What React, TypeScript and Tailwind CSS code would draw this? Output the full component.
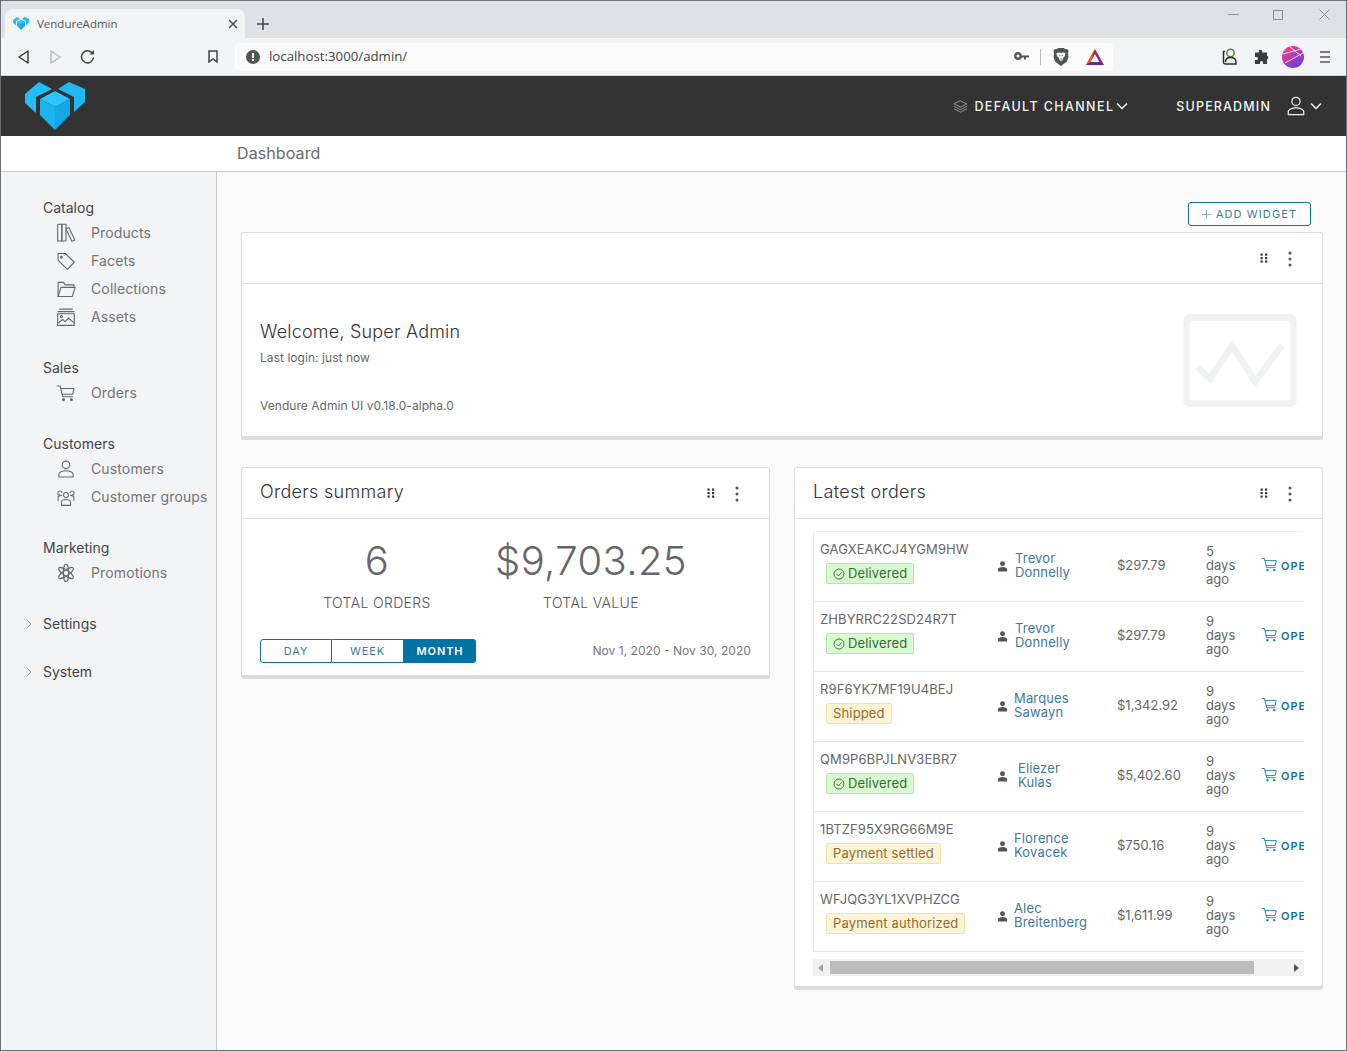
import React from 'react';

const FONT = "font-['Inter','Liberation_Sans',sans-serif]";

const Logo: React.FC<{ className?: string }> = ({ className }) => (
  <svg className={className} viewBox="25 82 60 48">
    <polygon points="39,82 25,94 25,103 36,113 36,97 52,89" fill="#22bdfb" />
    <polygon points="69,82 85,89 85,102 74,112 74,97 58,89" fill="#1fb8f5" />
    <polygon points="55,91 40,99 55,107 70,99" fill="#2cc4ff" />
    <polygon points="40,99 40,115 55,130 55,107" fill="#1cb5f4" />
    <polygon points="70,99 70,115 55,130 55,107" fill="#12a8e6" />
  </svg>
);

const Line: React.FC<{ className?: string; children: React.ReactNode; box?: string }> = ({ className, children, box = '0 0 24 24' }) => (
  <svg className={className} viewBox={box} fill="none" stroke="currentColor" strokeWidth={1.3} strokeLinecap="round" strokeLinejoin="round">
    {children}
  </svg>
);

const ProductsIcon = () => (
  <Line className="w-[20px] h-[20px]">
    <rect x="2" y="1.500" width="5" height="20" />
    <rect x="7" y="1.500" width="5" height="20" />
    <path d="M12.500 7l3-1.500 7 15-3.500 1.500-6.500-14" />
  </Line>
);
const FacetsIcon = () => (
  <Line className="w-[20px] h-[20px]">
    <path d="M2.500 3.500v7.500l11 11 8.500-8.500-11-10.500h-8.500z" />
    <circle cx="6.500" cy="7.500" r="1.100" />
  </Line>
);
const CollectionsIcon = () => (
  <Line className="w-[20px] h-[20px]">
    <path d="M2.500 21V4h6.500l2 3h10.500v3" />
    <path d="M2.500 21l3.500-11h17l-3.500 11h-17z" />
  </Line>
);
const AssetsIcon = () => (
  <Line className="w-[20px] h-[20px]">
    <rect x="2" y="8" width="20" height="14" />
    <path d="M2.500 5.500h19M4.500 2.500h15" strokeWidth={1.600} />
    <circle cx="6.500" cy="11.500" r="1.200" />
    <path d="M3 19l5-4 3 2.500 4-4 6 5" />
  </Line>
);
const CartIcon: React.FC<{ className?: string }> = ({ className = 'w-[20px] h-[20px]' }) => (
  <Line className={className}>
    <path d="M1.500 3.500h3.500l3 13h12" />
    <path d="M5.500 6.500h16l-1.500 7h-12.800" />
    <circle cx="9" cy="20" r="1.100" fill="currentColor" />
    <circle cx="18.500" cy="20" r="1.100" fill="currentColor" />
  </Line>
);
const UserIcon: React.FC<{ className?: string }> = ({ className = 'w-[20px] h-[20px]' }) => (
  <Line className={className}>
    <circle cx="12" cy="7" r="4.500" />
    <path d="M3.500 21.500v-3.500c0-2 4-4 8.500-4s8.500 2 8.500 4v3.500z" />
  </Line>
);
const GroupsIcon = () => (
  <Line className="w-[20px] h-[20px]">
    <circle cx="12" cy="9.500" r="3" />
    <path d="M6.500 22v-4c0-1.500 2.500-3 5.500-3s5.500 1.500 5.500 3v4z" />
    <path d="M7 7a2.400 2.400 0 1 0-2.500 2.500M17 7a2.400 2.400 0 1 1 2.500 2.500" />
    <path d="M2.500 16v-3.500c0-1.500 1.500-2.500 4-2.500M21.500 16v-3.500c0-1.500-1.500-2.500-4-2.500" />
  </Line>
);
const PromotionsIcon = () => (
  <Line className="w-[20px] h-[20px]">
    <ellipse cx="12" cy="12" rx="3.200" ry="10.500" />
    <ellipse cx="12" cy="12" rx="3.200" ry="10.500" transform="rotate(55 12 12)" />
    <ellipse cx="12" cy="12" rx="3.200" ry="10.500" transform="rotate(-55 12 12)" />
  </Line>
);
const ChevronDown: React.FC<{ className?: string }> = ({ className }) => (
  <svg className={className} viewBox="0 0 12 8" fill="none" stroke="currentColor" strokeWidth={1.500}>
    <path d="M1 1.500l5 5 5-5" />
  </svg>
);
const ChevronRight = () => (
  <svg className="w-[6px] h-[10px] text-[#999]" viewBox="0 0 6 10" fill="none" stroke="currentColor" strokeWidth={1}>
    <path d="M1 1l4 4-4 4" />
  </svg>
);
const GripIcon = () => (
  <svg className="w-[8px] h-[10px] text-[#333] -mt-[2px]" viewBox="0 0 8 10" fill="currentColor">
    <rect x="0.500" y="0.500" width="2.200" height="2.200" />
    <rect x="5" y="0.500" width="2.200" height="2.200" />
    <rect x="0.500" y="4" width="2.200" height="2.200" />
    <rect x="5" y="4" width="2.200" height="2.200" />
    <rect x="0.500" y="7.500" width="2.200" height="2.200" />
    <rect x="5" y="7.500" width="2.200" height="2.200" />
  </svg>
);
const DotsIcon = () => (
  <svg className="w-[4px] h-[16px] text-[#555]" viewBox="0 0 4 16" fill="currentColor">
    <circle cx="2" cy="2" r="1.500" />
    <circle cx="2" cy="8" r="1.500" />
    <circle cx="2" cy="14" r="1.500" />
  </svg>
);

const CardActions: React.FC = () => (
  <div className="ml-auto flex items-center mr-[30px] mt-[2px]">
    <GripIcon />
    <div className="w-[20px]" />
    <DotsIcon />
  </div>
);

const Card: React.FC<{ title?: string; className?: string; children: React.ReactNode }> = ({ title, className = '', children }) => (
  <div className={`bg-white border border-[#dcdcdc] border-b-[4px] rounded-[3px] ${className}`}>
    <div className="h-[51px] border-b border-[#e0e0e0] flex items-center pl-[18px]">
      {title && <span className="-mt-[4px] text-[18px] tracking-[0.3px] text-[#333] font-light">{title}</span>}
      <CardActions />
    </div>
    {children}
  </div>
);

const NavSection: React.FC<{ label: string; items: [React.ReactNode, string][] }> = ({ label, items }) => (
  <div className="mt-[25px] first:mt-0">
    <div className="h-[23px] pl-[42px] flex items-center text-[14px] text-[#444]">{label}</div>
    {items.map(([icon, name]) => (
      <div key={name} className="h-[28px] flex items-center pl-[55px] text-[14px] tracking-[0.13px] text-[#737373]">
        <span className="w-[35px] flex text-[#666]">{icon}</span>
        <span className="whitespace-nowrap pb-[2px]">{name}</span>
      </div>
    ))}
  </div>
);

const Collapsed: React.FC<{ label: string }> = ({ label }) => (
  <div className="mt-[25px] h-[23px] flex items-center pl-[25px] text-[14px] text-[#444]">
    <span className="w-[17px] flex"><ChevronRight /></span>
    {label}
  </div>
);

type Order = {
  code: string;
  status: string;
  first: string;
  last: string;
  nameClass: string;
  total: string;
  age: string;
};

const orders: Order[] = [
  { code: 'GAGXEAKCJ4YGM9HW', status: 'Delivered', first: 'Trevor', last: 'Donnelly', nameClass: 'ml-[7px]', total: '$297.79', age: '5' },
  { code: 'ZHBYRRC22SD24R7T', status: 'Delivered', first: 'Trevor', last: 'Donnelly', nameClass: 'ml-[7px]', total: '$297.79', age: '9' },
  { code: 'R9F6YK7MF19U4BEJ', status: 'Shipped', first: 'Marques', last: 'Sawayn', nameClass: 'ml-[6px]', total: '$1,342.92', age: '9' },
  { code: 'QM9P6BPJLNV3EBR7', status: 'Delivered', first: 'Eliezer', last: 'Kulas', nameClass: 'ml-[10px]', total: '$5,402.60', age: '9' },
  { code: '1BTZF95X9RG66M9E', status: 'Payment settled', first: 'Florence', last: 'Kovacek', nameClass: 'ml-[6px]', total: '$750.16', age: '9' },
  { code: 'WFJQG3YL1XVPHZCG', status: 'Payment authorized', first: 'Alec', last: 'Breitenberg', nameClass: 'ml-[6px]', total: '$1,611.99', age: '9' },
];

const StatusBadge: React.FC<{ status: string }> = ({ status }) => {
  const done = status === 'Delivered';
  return (
    <span className={`inline-flex items-center h-[21px] px-[6px] rounded-[2px] border text-[13px] tracking-[0.15px] ${done ? 'bg-[#d9f9d0] border-[#b2e8a4] text-[#356a35]' : 'bg-[#fff3d6] border-[#f7e0a8] text-[#8c6d2f]'}`}>
      {done && (
        <svg className="w-[12px] h-[12px] mr-[3px]" viewBox="0 0 12 12" fill="none" stroke="currentColor" strokeWidth={0.900}>
          <circle cx="6" cy="6" r="5" />
          <path d="M3.500 6l2 2 3-3.500" />
        </svg>
      )}
      {status}
    </span>
  );
};

const OrderRow: React.FC<{ order: Order }> = ({ order }) => (
  <div className="h-[70px] flex border-b border-[#e8e8e8] text-[13px] text-[#666] w-[560px]">
    <div className="w-[183px] shrink-0 pl-[6px] pt-[10px]">
      <div className="leading-[14px] tracking-[0.1px] whitespace-nowrap">{order.code}</div>
      <div className="mt-[7px] pl-[6px]"><StatusBadge status={order.status} /></div>
    </div>
    <div className="w-[120px] shrink-0 flex items-center">
      <svg className="w-[11px] h-[11px] text-[#555]" viewBox="0 0 12 12" fill="currentColor">
        <circle cx="6" cy="3" r="2.700" />
        <path d="M1 11.500v-2.500c0-1.500 2.200-2.500 5-2.500s5 1 5 2.500v2.500z" />
      </svg>
      <div className={`-mt-[4px] leading-[14px] tracking-[0.15px] text-[#41799a] ${order.nameClass}`}>
        <div>{order.first}</div>
        <div>{order.last}</div>
      </div>
    </div>
    <div className="w-[89px] shrink-0 flex items-center pb-[2px]">{order.total}</div>
    <div className="w-[56px] shrink-0 flex flex-col justify-center leading-[14px] pb-[4px]">
      <span>{order.age}</span>
      <span>days</span>
      <span>ago</span>
    </div>
    <div className="shrink-0 flex items-center text-[#1a7fa8]">
      <CartIcon className="w-[17px] h-[17px] -mt-[4px] -ml-[1px]" />
      <span className="ml-[3px] text-[11px] font-semibold tracking-[1px] text-[#0e7296]">OPEN</span>
    </div>
  </div>
);

const BrowserChrome: React.FC = () => (
  <div className="font-['Open_Sans',sans-serif]">
    <div className="h-[37px] bg-[#dee1e6] flex items-end pl-[4px]">
      <div className="w-[240px] h-[29px] bg-[#f3f4f5] rounded-t-[8px] flex items-center pl-[8px] pr-[7px] text-[11.500px] text-[#555]">
        <Logo className="w-[16px] h-[13px]" />
        <span className="ml-[8px]">VendureAdmin</span>
        <svg className="ml-auto w-[10px] h-[10px] text-[#444]" viewBox="0 0 10 10" stroke="currentColor" strokeWidth={1.400}>
          <path d="M1 1l8 8M9 1l-8 8" />
        </svg>
      </div>
      <svg className="ml-[12px] mb-[8px] w-[12px] h-[12px] text-[#444]" viewBox="0 0 12 12" stroke="currentColor" strokeWidth={1.500}>
        <path d="M6 0v12M0 6h12" />
      </svg>
      <div className="ml-auto self-start mt-[8px] flex items-center text-[#8b8d90]">
        <svg className="w-[11px] h-[11px]" viewBox="0 0 11 11" stroke="currentColor"><path d="M0 5.500h11" /></svg>
        <svg className="ml-[34px] w-[10px] h-[10px]" viewBox="0 0 10 10" fill="none" stroke="currentColor"><rect x="0.500" y="0.500" width="9" height="9" /></svg>
        <svg className="ml-[36px] mr-[16px] w-[11px] h-[11px]" viewBox="0 0 11 11" stroke="currentColor"><path d="M0.500 0.500l10 10M10.500 0.500l-10 10" /></svg>
      </div>
    </div>
    <div className="h-[38px] bg-[#f3f4f5] flex items-center pl-[6px] border-b border-[#cfd1d4]">
      <button className="w-[32px] flex justify-center text-[#333]">
        <svg className="w-[11px] h-[14px]" viewBox="0 0 11 14" fill="none" stroke="currentColor" strokeWidth={1.400} strokeLinejoin="round"><path d="M10 1v12L1 7z" /></svg>
      </button>
      <button className="w-[32px] flex justify-center text-[#b5b7ba]">
        <svg className="w-[11px] h-[14px]" viewBox="0 0 11 14" fill="none" stroke="currentColor" strokeWidth={1.400} strokeLinejoin="round"><path d="M1 1v12l9-6z" /></svg>
      </button>
      <button className="w-[32px] flex justify-center text-[#444]">
        <svg className="w-[15px] h-[15px]" viewBox="0 0 15 15" fill="none" stroke="currentColor" strokeWidth={1.500}>
          <path d="M12.500 4.500a6 6 0 1 0 1 4" />
          <path d="M14 1v4.500H9.500z" fill="currentColor" stroke="none" />
        </svg>
      </button>
      <button className="ml-[94px] w-[32px] flex justify-center text-[#444]">
        <svg className="w-[10px] h-[13px]" viewBox="0 0 10 13" fill="none" stroke="currentColor" strokeWidth={1.500}><path d="M1 1h8v11L5 9l-4 3z" /></svg>
      </button>
      <div className="ml-[6px] w-[878px] h-[28px] bg-[#fbfbfb] rounded-[4px] flex items-center pl-[11px] text-[13.250px] text-[#444]">
        <svg className="w-[14px] h-[14px]" viewBox="0 0 14 14">
          <circle cx="7" cy="7" r="7" fill="#555" />
          <rect x="6" y="3" width="2" height="5" fill="#fff" />
          <rect x="6" y="9" width="2" height="2" fill="#fff" />
        </svg>
        <span className="ml-[9px]">localhost:3000/admin/</span>
        <svg className="ml-auto w-[15px] h-[9px]" viewBox="0 0 15 9" fill="#555">
          <path d="M4 0a4 4 0 1 0 3.800 5.500H10v2h2v-2h3v-2H7.800A4 4 0 0 0 4 0zm0 2.500a1.500 1.500 0 1 1 0 3 1.500 1.500 0 0 1 0-3z" />
        </svg>
        <div className="ml-[11px] w-px h-[16px] bg-[#bbb]" />
        <svg className="ml-[12px] w-[16px] h-[18px]" viewBox="0 0 16 18">
          <path d="M3.500 1l2-1h5l2 1 2.500.500.500 2-.500 2 .500 3-1.500 5-6 4.500-6-4.500-1.500-5 .500-3-.500-2 .500-2z" fill="#4f5358" />
          <path d="M3.500 5l3-.500 1.500.500 1.500-.500 3 .500-.500 3-2 2-.500 2-1.500 1.500L6.500 12l-.500-2-2-2z" fill="#fff" />
          <path d="M6 7l1.500 1M10 7L8.500 8M8 10v3" stroke="#4f5358" strokeWidth={0.800} />
        </svg>
        <svg className="ml-[17px] mr-[9px] w-[18px] h-[16px]" viewBox="0 0 18 16">
          <polygon points="9,0 18,16 0,16" fill="#9e1f63" />
          <polygon points="9,0 0,16 5,13" fill="#ff5000" />
          <polygon points="9,5 13.500,13 4.500,13" fill="#fff" />
          <polygon points="0,16 18,16 13.500,13 4.500,13" fill="#662d91" />
        </svg>
      </div>
      <div className="ml-[100px] w-[32px] flex justify-center">
        <svg className="w-[16px] h-[17px]" viewBox="0 0 16 17" fill="none" strokeWidth={1.500}>
          <circle cx="9.500" cy="5" r="3.700" stroke="#4b8f3a" />
          <path d="M4 3.500H2.500v10.500c0 1 .500 2 2 2H15v-1.500c0-3-2-5-5.500-5s-5 2-5 4.500" stroke="#2b2b2b" />
        </svg>
      </div>
      <div className="w-[32px] flex justify-center">
        <svg className="w-[14px] h-[14px]" viewBox="0 0 14 14" fill="#3c3c3c">
          <path d="M5 0h3v2.500h5V6h1.500v3H13v5H9v-1.500a1.500 1.500 0 0 0-3 0V14H1v-4h1.500a1.500 1.500 0 0 0 0-3H1V2.500h4z" />
        </svg>
      </div>
      <div className="w-[32px] flex justify-center">
        <svg className="w-[22px] h-[22px]" viewBox="0 0 22 22">
          <defs>
            <linearGradient id="avatarGrad" x1="0.800" y1="0.900" x2="0.200" y2="0.100">
              <stop offset="0" stopColor="#6a3fd8" />
              <stop offset="1" stopColor="#ef3d8e" />
            </linearGradient>
          </defs>
          <circle cx="11" cy="11" r="11" fill="url(#avatarGrad)" />
          <path d="M1 8l18-5M3 17L21 7M8 1l11 9" stroke="#fff" strokeWidth={0.800} fill="none" />
        </svg>
      </div>
      <div className="w-[32px] flex justify-center">
        <svg className="w-[10px] h-[12px]" viewBox="0 0 10 12" stroke="#555" strokeWidth={1.700}>
          <path d="M0 1h10M0 6h10M0 11h10" />
        </svg>
      </div>
    </div>
  </div>
);

const App: React.FC = () => (
  <div className={`h-[1051px] w-[1347px] flex flex-col border border-[#6d7176] overflow-hidden ${FONT}`}>
    <BrowserChrome />
    <header className="h-[60px] shrink-0 bg-[#333] flex items-center text-[#f2f2f2]">
      <Logo className="ml-[24px] w-[60px] h-[48px]" />
      <div className="ml-auto flex items-center text-[12.500px] font-medium">
        <Line className="w-[15px] h-[15px] text-[#aaa]">
          <path d="M12 3l10 5-10 5-10-5zM2 12l10 5 10-5M2 16l10 5 10-5" />
        </Line>
        <span className="ml-[6px] pt-[2px] tracking-[1.400px]">DEFAULT CHANNEL</span>
        <ChevronDown className="ml-[2px] w-[12px] h-[8px]" />
        <span className="ml-[48px] pt-[2px] tracking-[1.150px]">SUPERADMIN</span>
        <UserIcon className="ml-[14px] w-[22px] h-[22px]" />
        <ChevronDown className="ml-[3px] mr-[24px] w-[12px] h-[8px]" />
      </div>
    </header>
    <div className="h-[36px] shrink-0 bg-white border-b border-[#ccc] flex items-center pl-[236px] text-[16px] tracking-[0.1px] text-[#6b6b6b]">
      <span className="pb-[2px]">Dashboard</span>
    </div>
    <div className="flex-1 flex min-h-0">
      <nav className="w-[216px] shrink-0 bg-[#f3f4f6] border-r border-[#c8c8c8] pt-[24px]">
        <NavSection
          label="Catalog"
          items={[
            [<ProductsIcon />, 'Products'],
            [<FacetsIcon />, 'Facets'],
            [<CollectionsIcon />, 'Collections'],
            [<AssetsIcon />, 'Assets'],
          ]}
        />
        <NavSection label="Sales" items={[[<CartIcon />, 'Orders']]} />
        <NavSection
          label="Customers"
          items={[
            [<UserIcon />, 'Customers'],
            [<GroupsIcon />, 'Customer groups'],
          ]}
        />
        <NavSection label="Marketing" items={[[<PromotionsIcon />, 'Promotions']]} />
        <Collapsed label="Settings" />
        <Collapsed label="System" />
      </nav>
      <main className="flex-1 bg-[#fafafa] pl-[24px] pr-[23px] pt-[30px]">
        <div className="flex justify-end pr-[12px]">
          <button className="h-[24px] w-[123px] border border-[#0e7296] rounded-[3px] bg-white flex items-center justify-center text-[11px] tracking-[1.100px] text-[#3a7d9c]">
            <svg className="w-[9px] h-[9px] mr-[5px] text-[#8fb5c7]" viewBox="0 0 9 9" stroke="currentColor"><path d="M4.500 0v9M0 4.500h9" /></svg>
            ADD WIDGET
          </button>
        </div>
        <Card className="mt-[6px] h-[208px]">
          <div className="flex pl-[18px] pr-[25px]">
            <div className="pt-[36px]">
              <div className="text-[18px] leading-[24px] tracking-[0.2px] text-[#333] font-light">Welcome, Super Admin</div>
              <div className="mt-[6px] text-[12px] leading-[16px] tracking-[0.05px] text-[#666]">Last login: just now</div>
              <div className="mt-[32px] text-[12px] leading-[16px] tracking-[0.05px] text-[#666]">Vendure Admin UI v0.18.0-alpha.0</div>
            </div>
            <svg className="ml-auto mt-[30px] w-[114px] h-[93px]" viewBox="0 0 114 93" fill="none" stroke="#f0f2f4" strokeWidth={6.500}>
              <rect x="3.500" y="3.500" width="107" height="86" rx="3" />
              <path d="M15 53l12 12 22-34 23 37 27-37" />
            </svg>
          </div>
        </Card>
        <div className="mt-[27px] grid grid-cols-2 gap-6 items-start">
          <Card title="Orders summary" className="h-[212px]">
            <div className="flex pl-[28px] pt-[19px]">
              {[['6', 'TOTAL ORDERS'], ['$9,703.25', 'TOTAL VALUE']].map(([value, label]) => (
                <div key={label} className="w-[214px] text-center">
                  <div className="text-[40px] leading-[46px] tracking-[0.4px] text-[#666] font-light">{value}</div>
                  <div className="mt-[10px] text-[14px] leading-[18px] tracking-[0.35px] text-[#555] font-light">{label}</div>
                </div>
              ))}
            </div>
            <div className="mt-[27px] flex items-center pl-[18px] pr-[18px]">
              <div className="flex h-[24px] text-[11px] tracking-[0.900px]">
                <span className="w-[72px] flex items-center justify-center border border-[#0e7296] rounded-l-[3px] text-[#3a7d9c]">DAY</span>
                <span className="w-[72px] flex items-center justify-center border-y border-r border-[#0e7296] text-[#3a7d9c]">WEEK</span>
                <span className="w-[72px] flex items-center justify-center bg-[#0072a3] rounded-r-[3px] text-white font-semibold">MONTH</span>
              </div>
              <span className="ml-auto text-[12.100px] text-[#777]">Nov 1, 2020 - Nov 30, 2020</span>
            </div>
          </Card>
          <Card title="Latest orders" className="h-[523px]">
            <div className="ml-[18px] w-[491px] mt-[12px]">
              <div className="border-t border-l border-[#eeeeee] rounded-t-[3px] overflow-hidden">
                {orders.map((o) => (
                  <OrderRow key={o.code} order={o} />
                ))}
              </div>
              <div className="mt-[7px] h-[17px] bg-[#f1f1f1] flex items-center">
                <svg className="ml-[5px] w-[5px] h-[8px] text-[#a3a3a3]" viewBox="0 0 5 8" fill="currentColor"><path d="M5 0v8L0 4z" /></svg>
                <div className="ml-[7px] w-[424px] h-[13px] bg-[#bdbdbd]" />
                <svg className="ml-auto mr-[5px] w-[5px] h-[8px] text-[#505050]" viewBox="0 0 5 8" fill="currentColor"><path d="M0 0v8l5-4z" /></svg>
              </div>
            </div>
          </Card>
        </div>
      </main>
    </div>
  </div>
);

export default App;
